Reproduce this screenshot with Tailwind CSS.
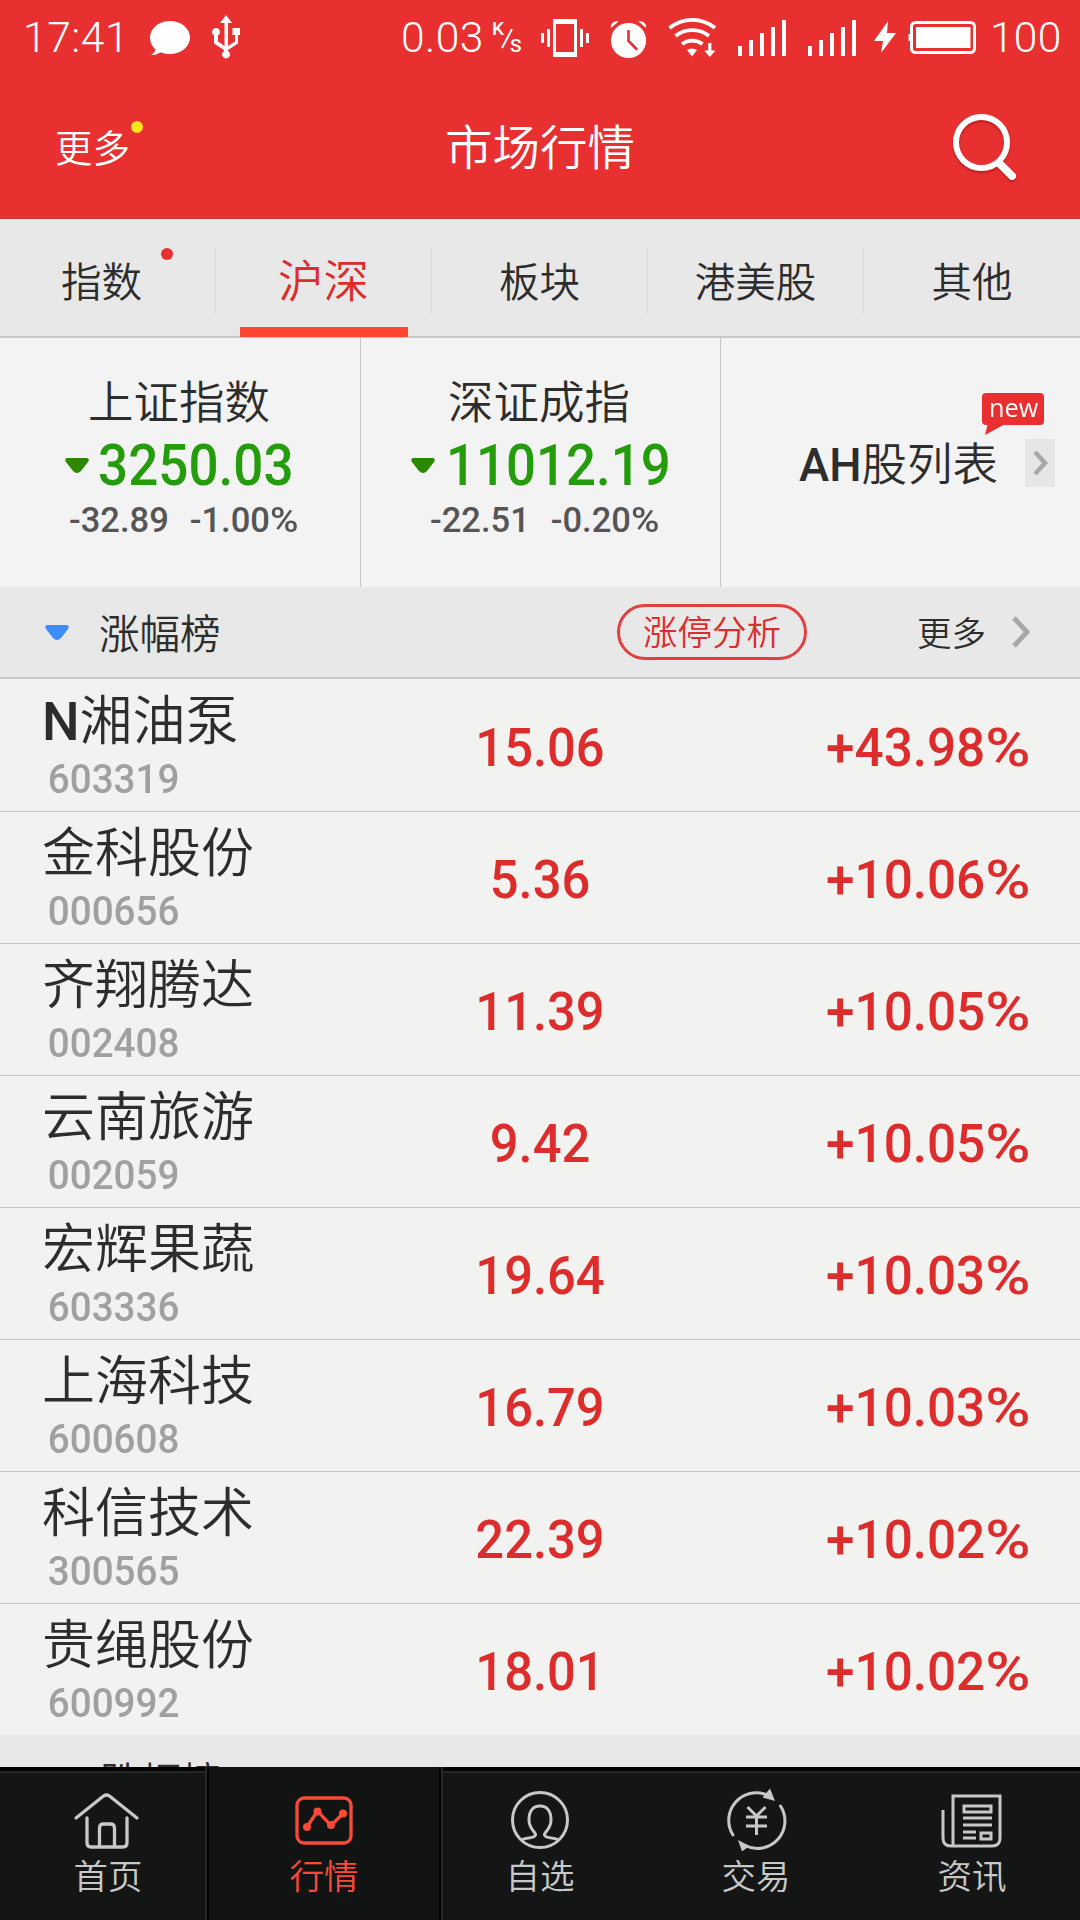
<!DOCTYPE html>
<html lang="zh-CN">
<head>
    <meta charset="UTF-8">
    <meta name="viewport" content="width=device-width, initial-scale=1.0">
    <title>市场行情</title>
    <script src="https://cdn.jsdelivr.net/npm/@tailwindcss/browser@4"></script>
</head>
<body class="w-[1080px] h-[1920px] overflow-hidden flex flex-col bg-[#f2f2f0] text-[#2d2d2d] font-[350] font-['Roboto','Noto_Sans_CJK_SC',sans-serif]">

    <!-- Header -->
    <header class="h-[219px] shrink-0 bg-[#e83030] text-white border-b border-[#d03a3a]">
        <!-- Status bar -->
        <div class="h-[76px] relative font-light">
            <svg class="absolute inset-0" width="1080" height="76" viewBox="0 0 1080 76" fill="#fff">
                <!-- message -->
                <path d="M170 21c11 0 20 7.300 20 16.500S181 54 170 54c-4 0-7-.6-9.500-1.800C158 54 155 55 151 54.800c2.500-1.500 4-3 4.500-5.300C152 46.500 150 42.500 150 37.500 150 28.300 159 21 170 21z"/>
                <!-- usb -->
                <path d="M226 15l6 8h-4v23l7-4.500V35h-2.500v-7h7.500v7h-2v8.500l-10 6.500v1a4 4 0 1 1-4 0v-1l-10-6.500V35.500a4 4 0 1 1 4 0v6l6.500 4.500V23H220z"/>
                <!-- vibrate -->
                <path fill-rule="evenodd" d="M553 19h24v38h-24zM556 24v28h18V24z"/>
                <path d="M547 29h3v18h-3zM541 33h3v10h-3zM580 29h3v18h-3zM586 33h3v10h-3z"/>
                <!-- alarm -->
                <circle cx="628.500" cy="40.500" r="17.600"/>
                <path d="M611 28c-1-4 3-8 7.500-6.500zM646 28c1-4-3-8-7.500-6.500z"/>
                <path d="M628.500 31v10l8 8" fill="none" stroke="#e83030" stroke-width="2.600" stroke-linecap="round"/>
                <!-- wifi -->
                <g fill="none" stroke="#fff" stroke-width="3.800">
                    <path d="M669.500 28a36 36 0 0 1 45.500 0"/>
                    <path d="M675.500 36a27 27 0 0 1 33.500 0"/>
                    <path d="M682 44a17 17 0 0 1 20.500 0"/>
                </g>
                <path d="M687 50q5-3 10 0l-5 6.500zM708.200 43h3.200v7.500h4l-5.600 6.500-5.600-6.500h4z"/>
                <!-- signal -->
                <path d="M738 46h4v10h-4zM749 40h4v16h-4zM760 33h4v23h-4zM771 27h4v29h-4zM782 20h4v36h-4z"/>
                <path d="M808 46h4v10h-4zM819 40h4v16h-4zM830 33h4v23h-4zM841 27h4v29h-4zM852 20h4v36h-4z"/>
                <!-- charging -->
                <path d="M888 21l-14 20h9l-2 12 15-20h-9z"/>
                <!-- battery -->
                <rect x="911.500" y="22.500" width="63" height="30" rx="4" fill="none" stroke="#fff" stroke-width="3"/>
                <path d="M916 27h54.500v21H916zM908.500 34h2v7h-2z"/>
            </svg>
            <span class="absolute left-[23px] top-[13px] text-[42.5px] leading-[50px] tracking-[.6px]">17:41</span>
            <span class="absolute left-[401px] top-[13px] text-[42.5px] leading-[50px] tracking-[.5px]">0.03</span>
            <span class="absolute left-[492px] top-[18px] text-[19px] leading-[21px] font-medium">K</span>
            <svg class="absolute left-[501px] top-[28px]" width="12" height="21" viewBox="0 0 12 21"><path d="M1 20L11 1" stroke="#fff" stroke-width="2"/></svg>
            <span class="absolute left-[510px] top-[29px] text-[19px] leading-[34px] font-medium">S</span>
            <span class="absolute left-[990px] top-[13px] text-[42.5px] leading-[50px] tracking-[.3px]">100</span>
        </div>
        <!-- Title bar -->
        <div class="h-[142px] flex justify-between pl-[55px] pr-[58px] relative">
            <div class="relative mt-[45px]">
                <span class="text-[37.5px] leading-[56px]">更多</span>
                <i class="absolute left-[76px] top-0 size-3 rounded-full bg-[#ffe61e]"></i>
            </div>
            <h1 class="absolute inset-x-0 top-[38px] text-center text-[47.5px] leading-[70px] font-[350]">市场行情</h1>
            <svg class="mt-[36px] drop-shadow-[0_2px_1px_rgba(120,0,0,0.4)]" width="70" height="72" viewBox="0 0 70 72" fill="none" stroke="#fff" stroke-linecap="round">
                <circle cx="29.500" cy="30.500" r="25.500" stroke-width="6"/>
                <path d="M47 51l13 13" stroke-width="8"/>
            </svg>
        </div>
    </header>

    <!-- Tabs -->
    <nav class="h-[119px] shrink-0 bg-[#e8e8e8] border-b-2 border-[#c9c9c9] grid grid-cols-5 items-start pt-[29px] text-[40.5px] leading-[60px] text-center">
        <div class="h-[66px] border-r border-[#dadada] relative">
            <span class="block pr-[12px] pt-[5px]">指数</span>
            <i class="absolute left-[161px] top-0 size-3 rounded-full bg-[#e83030]"></i>
        </div>
        <div class="h-[66px] border-r border-[#dadada] relative text-[45.5px] text-[#dc2c2c]">
            <span class="block pt-[5px]">沪深</span>
            <i class="absolute left-[24px] top-[79px] w-[168px] h-[10px] bg-[#ff4430]"></i>
        </div>
        <div class="h-[66px] border-r border-[#dadada] pt-[5px]">板块</div>
        <div class="h-[66px] border-r border-[#dadada] pt-[5px]">港美股</div>
        <div class="h-[66px] pt-[5px]">其他</div>
    </nav>

    <!-- Indexes -->
    <section class="h-[249px] shrink-0 bg-[#f3f3f3] grid grid-cols-[361px_360px_359px]">
        <div class="border-r border-[#c6c6c6] pt-[33px] pl-[65px]">
            <div class="pl-[23px] text-[45.5px] leading-[66px]">上证指数</div>
            <div class="h-[60px] -mt-px flex items-center font-medium text-[#249c0c]">
                <svg class="shrink-0" width="24" height="16" viewBox="0 0 24 16"><path d="M2 0h20q3 1 1 4l-7 9q-4 4-8 0L1 4Q-1 1 2 0z" fill="#2c8800"/></svg>
                <span class="ml-[9px] text-[57.5px] leading-[60px] scale-x-[.922] origin-left">3250.03</span>
            </div>
            <div class="mt-[-1px] pl-[4px] flex gap-[21px] text-[34.5px] leading-[50px] font-medium text-[#555]">
                <span>-32.89</span>
                <span>-1.00<span class="inline-block scale-x-[1.12] origin-left">%</span></span>
            </div>
        </div>
        <div class="border-r border-[#c6c6c6] pt-[33px] pl-[50px]">
            <div class="pl-[37px] text-[45.5px] leading-[66px]">深证成指</div>
            <div class="h-[60px] -mt-px flex items-center font-medium text-[#249c0c]">
                <svg class="shrink-0" width="24" height="16" viewBox="0 0 24 16"><path d="M2 0h20q3 1 1 4l-7 9q-4 4-8 0L1 4Q-1 1 2 0z" fill="#2c8800"/></svg>
                <span class="ml-[11px] text-[57.5px] leading-[60px] scale-x-[.918] origin-left">11012.19</span>
            </div>
            <div class="mt-[-1px] pl-[19px] flex gap-[21px] text-[34.5px] leading-[50px] font-medium text-[#555]">
                <span>-22.51</span>
                <span>-0.20<span class="inline-block scale-x-[1.12] origin-left">%</span></span>
            </div>
        </div>
        <div class="relative flex pl-[78px] pt-[95px]">
            <div class="text-[45.5px] leading-[66px] whitespace-nowrap"><span class="font-medium">AH</span>股列表</div>
            <div class="absolute left-[304px] top-[101px] w-[30px] h-[48px] bg-[#e6e6e6] flex items-center justify-center">
                <svg class="ml-[2px]" width="16" height="26" viewBox="0 0 16 26"><path d="M2 2l10 11L2 24" fill="none" stroke="#a8a8a8" stroke-width="4.500"/></svg>
            </div>
            <div class="absolute left-[261px] top-[55px] w-[62px] h-[32px] rounded-[4px] bg-[#e83030] text-white">
                <svg class="absolute left-[3px] top-[30px]" width="22" height="13" viewBox="0 0 22 13"><path d="M3 0h19L0 12z" fill="#e83030"/></svg>
                <span class="absolute left-[7px] top-[-4px] text-[26px] leading-[36px] font-normal font-['Open_Sans',sans-serif] origin-left scale-x-[.97]">new</span>
            </div>
        </div>
    </section>

    <!-- Gainers -->
    <section class="h-[92px] shrink-0 bg-[#e8e8e8] border-b-2 border-[#c6c6c6] flex items-center pl-[45px] pr-[48px]">
        <svg class="shrink-0 mt-[2px]" width="24" height="16" viewBox="0 0 24 16"><path d="M2 0h20q3 1 1 4l-7 9q-4 4-8 0L1 4Q-1 1 2 0z" fill="#3f8cff"/></svg>
        <h2 class="ml-[30px] mt-[5px] text-[40.5px] leading-[60px] font-[350]">涨幅榜</h2>
        <div class="ml-auto w-[190px] h-[56px] rounded-[30px] border-3 border-[#e04040] text-[#dc2c2c] text-[34.5px] leading-[53px] text-center">涨停分析</div>
        <div class="ml-[110px] mt-[4px] text-[34.5px] leading-[50px]">更多</div>
        <svg class="ml-[25px]" width="21" height="32" viewBox="0 0 21 32"><path d="M3 2l13 14L3 30" fill="none" stroke="#a8a8a8" stroke-width="5"/></svg>
    </section>
    <main id="stocks" class="h-[1056px] shrink-0 pt-px"></main>

    <!-- Next section, cut off by the bottom bar -->
    <section class="h-[32px] shrink-0 bg-[#e8e8e8] overflow-hidden pl-[100px] pt-[18px]">
        <h2 class="text-[40.5px] leading-[60px] font-[350]">跌幅榜</h2>
    </section>

    <!-- Bottom bar -->
    <footer class="h-[153px] shrink-0 bg-[#141616] relative flex text-[#c8c8c8] text-[34.5px] leading-[52px] text-center">
        <i class="absolute inset-x-0 top-0 h-[6px] bg-black border-b-2 border-[#232525]"></i>
        <i class="absolute left-[205px] top-0 w-[238px] h-[153px] bg-[#121414] border-x-2 border-[#262828]"></i>
        <i class="absolute left-[207px] top-0 w-[234px] h-[153px] border-x-2 border-black"></i>
        <div class="relative w-[216px] pt-[20px] flex flex-col items-center">
            <svg width="70" height="64" viewBox="0 0 70 64" fill="none" stroke="#c8c8c8" stroke-width="3.300" stroke-linecap="round" stroke-linejoin="round">
                <path d="M3 31L30.500 9q3-2 6 0L64 31M14 31v25q0 4 4 4h32q4 0 4-4V31M26.500 59V41q0-4 4-4h7q4 0 4 4v18"/>
            </svg>
            <span>首页</span>
        </div>
        <div class="relative w-[216px] pt-[20px] flex flex-col items-center text-[#f94a38]">
            <svg width="70" height="64" viewBox="0 0 70 64" fill="none" stroke="#f94a38" stroke-width="3.300">
                <rect x="8" y="11" width="54" height="45" rx="7"/>
                <path d="M18 40l10.500-16L42 38.500 54 26.500"/>
                <g fill="#f94a38" stroke="none"><circle cx="18" cy="40" r="4"/><circle cx="28.500" cy="24.500" r="4"/><circle cx="42" cy="38" r="4"/><circle cx="54" cy="26.500" r="4"/></g>
            </svg>
            <span>行情</span>
        </div>
        <div class="relative w-[216px] pt-[20px] flex flex-col items-center">
            <svg width="70" height="64" viewBox="0 0 70 64" fill="none" stroke="#c8c8c8" stroke-width="3">
                <circle cx="35" cy="33" r="27.500"/>
                <path d="M16.500 53c4-3 13-1 14-5 1-3-6.500-5-6.500-15 0-9 4-14 11-14s11 5 11 14c0 10-7.500 12-6.500 15 1 4 10 2 14 5"/>
            </svg>
            <span>自选</span>
        </div>
        <div class="relative w-[216px] pt-[20px] flex flex-col items-center">
            <svg width="70" height="64" viewBox="0 0 70 64" fill="none" stroke="#c8c8c8" stroke-width="3">
                <path d="M12 48A27.500 27.500 0 0 1 46 8M59.500 19A27.500 27.500 0 0 1 24 58.500" stroke-linecap="round"/>
                <path d="M49 1.500l5 12.500-12.500-3.500zM17 53l11.500 6-7.500 5.500z" fill="#c8c8c8" stroke="none"/>
                <path d="M26.500 20l9 9 9-9M25 30h21M25 39h21M35.500 29v19"/>
            </svg>
            <span>交易</span>
        </div>
        <div class="relative w-[216px] pt-[20px] flex flex-col items-center">
            <svg width="70" height="64" viewBox="0 0 70 64" fill="none" stroke="#c8c8c8" stroke-width="3">
                <path d="M16 58V9h47v42q0 8-8 8H14q-8 0-8-8V23"/>
                <path d="M27 19h27v6H27zM26 31h29M26 38h29M26 45h13M26 51h13M44 46h10v6H44z"/>
            </svg>
            <span>资讯</span>
        </div>
    </footer>

    <script>
        const stocks = [
            ['<span class="font-medium">N</span>湘油泵', '603319', '15.06', '+43.98'],
            ['金科股份', '000656', '5.36', '+10.06'],
            ['齐翔腾达', '002408', '11.39', '+10.05'],
            ['云南旅游', '002059', '9.42', '+10.05'],
            ['宏辉果蔬', '603336', '19.64', '+10.03'],
            ['上海科技', '600608', '16.79', '+10.03'],
            ['科信技术', '300565', '22.39', '+10.02'],
            ['贵绳股份', '600992', '18.01', '+10.02'],
        ];

        document.getElementById('stocks').innerHTML = stocks.map(([name, code, price, change]) => `
            <div class="h-[132px] border-b border-[#c6c6c6] last:border-b-0 last:h-[131px] grid grid-cols-3 px-[42px] font-medium text-[54.5px] text-[#dc2c2c]">
                <div>
                    <div class="mt-[7px] text-[53px] leading-[70px] font-[350] text-[#2d2d2d] whitespace-nowrap">${name}</div>
                    <div class="pl-[6px] text-[40px] leading-[46px] text-[#a0a0a0] font-medium scale-x-[.965] origin-left">${code}</div>
                </div>
                <div class="pt-[35px] leading-[64px] text-center scale-x-[.93]">${price}</div>
                <div class="pt-[35px] pr-[8px] leading-[64px] text-right scale-x-[.94] origin-right">${change}<span class="inline-block ml-[8px] scale-x-[1.2] origin-right">%</span></div>
            </div>`).join('');
    </script>
</body>
</html>
